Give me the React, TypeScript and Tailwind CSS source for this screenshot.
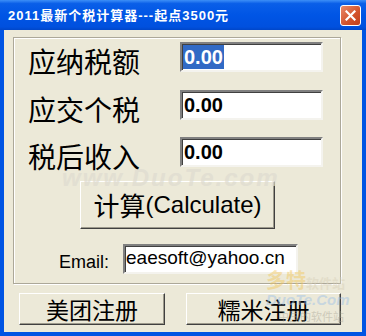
const cjk = "font-['Noto_Sans_CJK_SC',sans-serif]";
const arial = "font-['Liberation_Sans','Noto_Sans_CJK_SC',sans-serif]";

const sunken =
  "border-2 border-t-[#808080] border-l-[#808080] border-b-[#f4f3ee] border-r-[#f4f3ee] shadow-[inset_1px_1px_0_#404040] bg-white";
const raised =
  "border border-t-white border-l-white border-b-[#404040] border-r-[#404040] shadow-[inset_-1px_-1px_0_#9d9a8c] bg-[#ECE9D8]";

function Row({ label, value, selected }: { label: string; value: string; selected?: boolean }) {
  return (
    <div className="flex items-start h-[30px]">
      <div className={`w-[166px] shrink-0 pl-[14px] mt-[5px] text-[28px] leading-none text-black ${cjk}`}>
        {label}
      </div>
      <div className={`w-[143px] h-[30px] flex items-center pl-[1px] ${sunken}`}>
        <span
          className={`text-[20px] font-bold leading-[24px] px-[1px] ${arial} ${
            selected ? "bg-[#316AC5] text-white" : "text-black"
          }`}
        >
          {value}
        </span>
      </div>
    </div>
  );
}

export default function App() {
  return (
    <div className="relative w-[366px] h-[336px] bg-[#0054E3] flex flex-col overflow-hidden">
      {/* title bar */}
      <div className="h-[30px] shrink-0 flex items-center justify-between pl-[8px] pr-[5px] bg-[linear-gradient(#3d8ff7_0%,#0a5fe8_12%,#0055e5_50%,#0050de_90%,#0046c8_100%)]">
        <span className={`text-white text-[13px] font-bold tracking-[1px] pt-[2px] ${arial}`}>
          2011最新个税计算器---起点3500元
        </span>
        <div className="w-[21px] h-[21px] rounded-[3px] border border-white bg-[linear-gradient(135deg,#e9896a,#d2522a_60%,#c2401b)] flex items-center justify-center">
          <svg width="11" height="11" viewBox="0 0 11 11">
            <path d="M1.5 1.5 L9.5 9.5 M9.5 1.5 L1.5 9.5" stroke="white" strokeWidth="2.2" strokeLinecap="square" />
          </svg>
        </div>
      </div>

      {/* client area */}
      <div className="flex-1 mx-[4px] mb-[4px] bg-[#ECE9D8] flex flex-col pt-[7px]">
        <div className="ml-[9px] w-[328px] h-[247px] border border-[#ACA899] shadow-[inset_1px_1px_0_#fff,1px_1px_0_#fff] flex flex-col pt-[4px]">
          <Row label="应纳税额" value="0.00" selected />
          <div className="mt-[18px]">
            <Row label="应交个税" value="0.00" />
          </div>
          <div className="mt-[17px]">
            <Row label="税后收入" value="0.00" />
          </div>

          <button
            className={`mt-[14px] ml-[66px] w-[195px] h-[48px] flex items-center justify-center text-black ${raised}`}
          >
            <span className={`text-[26px] leading-none ${cjk}`}>计算</span>
            <span className={`text-[24px] leading-none ${arial}`}>(Calculate)</span>
          </button>

          <div className="mt-[15px] flex items-start">
            <span className={`ml-[45px] w-[64px] pt-[9px] text-[18px] leading-none text-black ${arial}`}>
              Email:
            </span>
            <div className={`w-[175px] h-[30px] pl-[1px] ${sunken}`}>
              <span className={`text-[19px] leading-[20px] text-black ${arial}`}>eaesoft@yahoo.cn</span>
            </div>
          </div>
        </div>

        <div className="mt-[9px] flex">
          <button className={`ml-[15px] w-[146px] h-[32px] flex items-center justify-center text-[23px] leading-none text-black ${cjk} ${raised}`}>
            美团注册
          </button>
          <button className={`ml-[21px] w-[155px] h-[32px] flex items-center justify-center text-[23px] leading-none text-black ${cjk} ${raised}`}>
            糯米注册
          </button>
        </div>
      </div>

      {/* watermark overlay */}
      <div className="pointer-events-none absolute left-[62px] top-[160px] text-[24px] font-bold italic tracking-[2px] text-[#dedbd0] opacity-70 font-['Liberation_Sans',sans-serif]">
        www.DuoTe.com
      </div>
      <div className="pointer-events-none absolute left-[266px] top-[270px] flex flex-col items-start opacity-45">
        <span className={`text-[20px] font-bold leading-none text-[#f2c65a] ${cjk}`}>
          多特<span className="text-[13px] text-[#d8d0b8]">软件站</span>
        </span>
        <span className="text-[15px] font-bold italic leading-none mt-[2px] text-[#9cc0e8] font-['Liberation_Sans',sans-serif]">
          DuoTe.Com
        </span>
        <span className={`text-[11px] leading-none mt-[4px] ml-[12px] text-[#a9a596] ${cjk}`}>中国的软件站</span>
      </div>
    </div>
  );
}
